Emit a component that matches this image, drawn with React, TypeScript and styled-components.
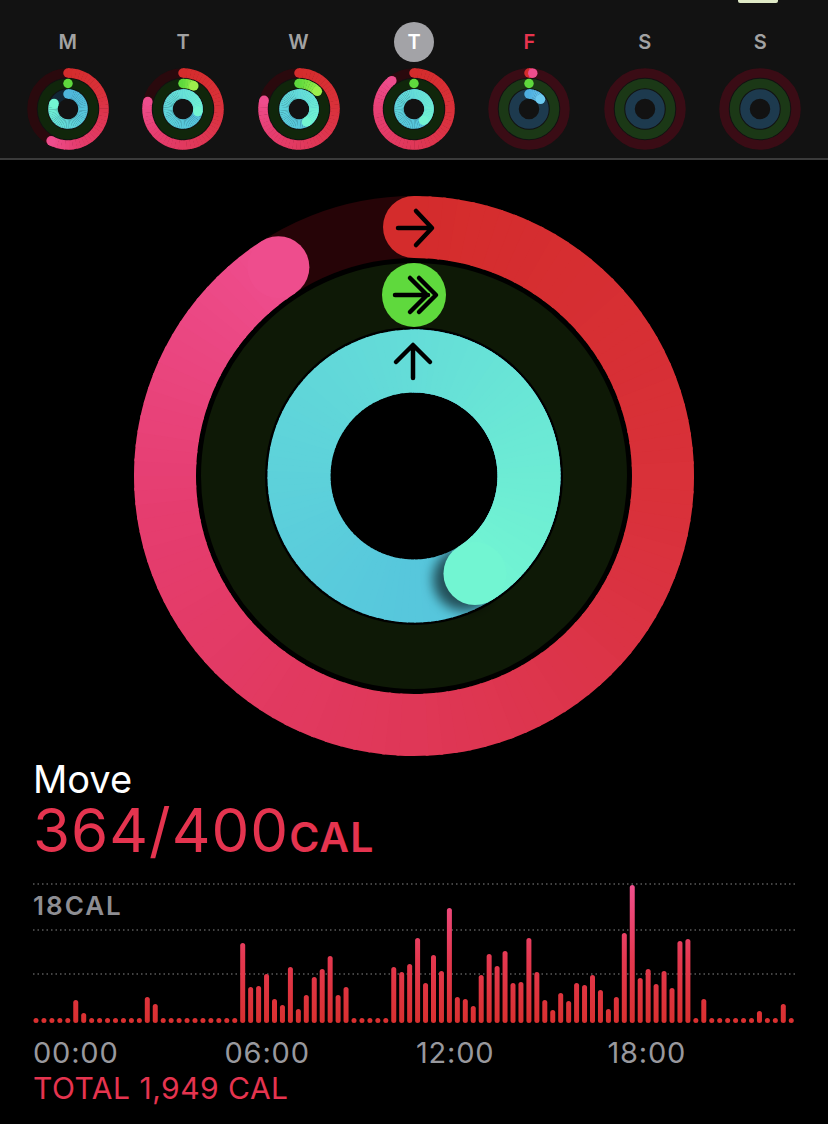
import React from 'react'
import styled, { createGlobalStyle } from 'styled-components'

const GlobalStyle = createGlobalStyle`
  html, body {
    margin: 0;
    padding: 0;
    background: #000;
  }
  body {
    font-family: Inter, "Liberation Sans", sans-serif;
    -webkit-font-smoothing: antialiased;
  }
`

const Page = styled.div`
  width: 828px;
  height: 1124px;
  background: #000;
  color: #fff;
  overflow: hidden;
`

const WeekStrip = styled.div`
  position: relative;
  display: grid;
  grid-template-columns: repeat(7, 1fr);
  padding: 22px 10px 8px;
  background: #121212;
  border-bottom: 2px solid #3a3a3a;
`

const TopTab = styled.div`
  position: absolute;
  top: 0;
  left: 738px;
  width: 40px;
  height: 3px;
  border-radius: 0 0 2px 2px;
  background: #dfe9c6;
`

const DayColumn = styled.div`
  display: flex;
  flex-direction: column;
  align-items: center;
  gap: 6px;
`

const DayLabel = styled.div<{ $today?: boolean; $accent?: boolean }>`
  width: 40px;
  height: 40px;
  border-radius: 50%;
  display: flex;
  align-items: center;
  justify-content: center;
  font-size: 20px;
  font-weight: 600;
  background: ${({ $today }) => ($today ? '#a3a3a7' : 'transparent')};
  color: ${({ $today, $accent }) => ($today ? '#fff' : $accent ? '#e8344f' : '#a2a2a2')};
`

const RingBox = styled.div`
  display: flex;
  justify-content: center;
  margin-top: 36px;
`

const Summary = styled.div`
  padding-left: 33px;
`

const Title = styled.div`
  margin-top: 4px;
  height: 40px;
  font-size: 38px;
  line-height: 38px;
  font-weight: 400;
  color: #fff;
`

const Value = styled.div`
  height: 60px;
  font-size: 60px;
  line-height: 60px;
  font-weight: 400;
  color: #e5344f;
  letter-spacing: 1px;
`

const Unit = styled.span`
  font-size: 41px;
  line-height: 0;
  font-weight: 600;
  letter-spacing: 1px;
`

const Chart = styled.div`
  position: relative;
  width: 762px;
  margin: 22px 0 0 33px;
  svg {
    display: block;
  }
`

const ScaleLabel = styled.div`
  position: absolute;
  top: 11px;
  left: 0;
  font-size: 26px;
  line-height: 26px;
  font-weight: 600;
  letter-spacing: 2px;
  color: #8e8e93;
`

const TimeRow = styled.div`
  display: flex;
  margin: 12px 0 0 33px;
`

const TimeLabel = styled.div`
  width: 191.5px;
  font-size: 29px;
  line-height: 29px;
  color: #98989d;
  letter-spacing: 0.8px;
`

const Total = styled.div`
  margin: 6px 0 0 33px;
  font-size: 30px;
  line-height: 30px;
  color: #e5344f;
  letter-spacing: 0.5px;
`

type Stop = [number, string]

const toRgb = (h: string) => [1, 3, 5].map((i) => parseInt(h.slice(i, i + 2), 16))

const colorAt = (stops: Stop[], t: number) => {
  for (let i = 1; i < stops.length; i++) {
    if (t <= stops[i][0]) {
      const [t0, c0] = stops[i - 1]
      const [t1, c1] = stops[i]
      const k = Math.max(0, (t - t0) / (t1 - t0 || 1))
      const a = toRgb(c0)
      const b = toRgb(c1)
      return `rgb(${a.map((v, j) => Math.round(v + (b[j] - v) * k)).join(',')})`
    }
  }
  return stops[stops.length - 1][1]
}

const point = (c: number, r: number, deg: number) => {
  const a = (deg * Math.PI) / 180
  return [c + r * Math.sin(a), c - r * Math.cos(a)]
}

interface ArcProps {
  c: number
  r: number
  w: number
  track: string
  sweep?: number
  stops: Stop[]
  step?: number
  shadowId?: string
}

// ring drawn as short arc pieces so the colour can run along the sweep
const ActivityArc = ({ c, r, w, track, sweep, stops, step = 3, shadowId }: ArcProps) => {
  const parts: React.ReactNode[] = [
    <circle key="track" cx={c} cy={c} r={r} fill="none" stroke={track} strokeWidth={w} />
  ]
  if (sweep === undefined) return <g>{parts}</g>

  const [sx, sy] = point(c, r, 0)
  parts.push(<circle key="start" cx={sx} cy={sy} r={w / 2} fill={colorAt(stops, 0)} />)
  if (sweep === 0) return <g>{parts}</g>

  const n = Math.max(1, Math.ceil(sweep / step))
  const d = sweep / n
  let shadowDone = !shadowId
  for (let i = 0; i < n; i++) {
    const a0 = i * d
    const a1 = Math.min(sweep, (i + 1) * d + 0.6)
    if (!shadowDone && a0 >= sweep - 34) {
      const [hx, hy] = point(c, r, sweep + 6)
      parts.push(
        <circle key="shadow" cx={hx} cy={hy} r={w / 2} fill="rgba(0,0,0,0.6)" filter={`url(#${shadowId})`} />
      )
      shadowDone = true
    }
    const [x0, y0] = point(c, r, a0)
    const [x1, y1] = point(c, r, a1)
    parts.push(
      <path
        key={i}
        d={`M${x0} ${y0}A${r} ${r} 0 0 1 ${x1} ${y1}`}
        fill="none"
        stroke={colorAt(stops, (a0 + d / 2) / sweep)}
        strokeWidth={w}
      />
    )
  }

  const [ex, ey] = point(c, r, sweep)
  parts.push(<circle key="end" cx={ex} cy={ey} r={w / 2} fill={colorAt(stops, 1)} />)
  return <g>{parts}</g>
}

const moveStops: Stop[] = [
  [0, '#d42c2c'],
  [0.3, '#d9313a'],
  [0.55, '#df3757'],
  [0.8, '#e53d6f'],
  [1, '#ee4d8d']
]
const exerciseStops: Stop[] = [
  [0, '#5fd93d'],
  [1, '#9cef4c']
]
const standStops: Stop[] = [
  [0, '#4eb6dc'],
  [0.4, '#58c9dc'],
  [0.7, '#64dcd8'],
  [1, '#72f5d2']
]
const fridayStand: Stop[] = [
  [0, '#4eaee0'],
  [1, '#6ccaf0']
]

interface Day {
  label: string
  today?: boolean
  accent?: boolean
  dim?: boolean
  move?: number
  exercise?: number
  stand?: number
  standStops?: Stop[]
}

const days: Day[] = [
  { label: 'M', move: 208, exercise: 0, stand: 292 },
  { label: 'T', move: 282, exercise: 25, stand: 460 },
  { label: 'W', move: 284, exercise: 46, stand: 510 },
  { label: 'T', today: true, move: 322, exercise: 0, stand: 500 },
  { label: 'F', accent: true, dim: true, move: 6, exercise: 0, stand: 50, standStops: fridayStand },
  { label: 'S', dim: true },
  { label: 'S', dim: true }
]

const MiniRings = ({ day }: { day: Day }) => (
  <svg width="82" height="82" viewBox="0 0 82 82">
    <ActivityArc c={41} r={36} w={9.5} step={6} track={day.dim ? '#3a0c15' : '#2a090d'} sweep={day.move} stops={moveStops} />
    <ActivityArc c={41} r={25.5} w={9.5} step={6} track={day.dim ? '#1b3816' : '#10260b'} sweep={day.exercise} stops={exerciseStops} />
    <ActivityArc
      c={41}
      r={15}
      w={9.5}
      step={6}
      track={day.dim ? '#1d3a4e' : '#112634'}
      sweep={day.stand}
      stops={day.standStops ?? standStops}
    />
  </svg>
)

const MainRings = () => (
  <svg width="560" height="560" viewBox="0 0 560 560">
    <defs>
      <filter id="capShadow" x="-50%" y="-50%" width="200%" height="200%">
        <feGaussianBlur stdDeviation="6" />
      </filter>
    </defs>
    <ActivityArc c={280} r={249} w={62} track="#260407" sweep={327} stops={moveStops} />
    <ActivityArc c={280} r={181} w={64} track="#0e1906" sweep={0} stops={exerciseStops} />
    <ActivityArc c={280} r={115} w={63} track="#0b2530" sweep={508} stops={standStops} shadowId="capShadow" />
    <g fill="none" stroke="#000" strokeWidth="4.5" strokeLinecap="round" strokeLinejoin="round">
      <path d="M264 32H297M282 15L298 32L282 49" />
      <path d="M261 99H294M276 82L293 99L276 116M285 82L302 99L285 116" />
      <path d="M279 182V150M262 166L279 149L296 166" />
    </g>
  </svg>
)

const hourly = [
  0, 0, 0, 0, 0, 23, 10, 0, 0, 0, 0, 0, 0, 0, 26, 19, 0, 0, 0, 0, 0, 0, 0, 0, 0, 0, 80, 36, 37, 49, 24, 18, 56, 14,
  28, 46, 54, 67, 28, 36, 0, 0, 0, 0, 0, 56, 51, 59, 85, 40, 68, 52, 115, 26, 24, 17, 48, 69, 57, 72, 40, 41, 85,
  51, 23, 13, 30, 22, 40, 38, 48, 33, 14, 26, 90, 138, 45, 54, 39, 52, 35, 82, 84, 0, 24, 0, 0, 0, 0, 0, 0, 12, 0,
  0, 19, 0
]

const BASE = 141

const BarChart = () => (
  <svg width="762" height="144" viewBox="0 0 762 144">
    <defs>
      <linearGradient id="barFill" gradientUnits="userSpaceOnUse" x1="0" y1={BASE} x2="0" y2="0">
        <stop offset="0" stopColor="#d9302f" />
        <stop offset="0.45" stopColor="#e4384f" />
        <stop offset="1" stopColor="#f0508f" />
      </linearGradient>
    </defs>
    {[2, 48, 92].map((y) => (
      <line key={y} x1="0" x2="762" y1={y} y2={y} stroke="#5a5a5a" strokeWidth="1.5" strokeDasharray="1.5 3" />
    ))}
    {hourly.map((h, i) => {
      const height = Math.max(5, h)
      return (
        <rect
          key={i}
          x={0.5 + i * 7.95}
          y={BASE - height}
          width="5"
          height={height}
          rx="2.5"
          fill="url(#barFill)"
        />
      )
    })}
  </svg>
)

export default function App() {
  return (
    <Page>
      <GlobalStyle />
      <WeekStrip>
        <TopTab />
        {days.map((d, i) => (
          <DayColumn key={i}>
            <DayLabel $today={d.today} $accent={d.accent}>
              {d.label}
            </DayLabel>
            <MiniRings day={d} />
          </DayColumn>
        ))}
      </WeekStrip>
      <RingBox>
        <MainRings />
      </RingBox>
      <Summary>
        <Title>Move</Title>
        <Value>
          364/400<Unit>CAL</Unit>
        </Value>
      </Summary>
      <Chart>
        <BarChart />
        <ScaleLabel>18CAL</ScaleLabel>
      </Chart>
      <TimeRow>
        <TimeLabel>00:00</TimeLabel>
        <TimeLabel>06:00</TimeLabel>
        <TimeLabel>12:00</TimeLabel>
        <TimeLabel>18:00</TimeLabel>
      </TimeRow>
      <Total>TOTAL 1,949 CAL</Total>
    </Page>
  )
}
